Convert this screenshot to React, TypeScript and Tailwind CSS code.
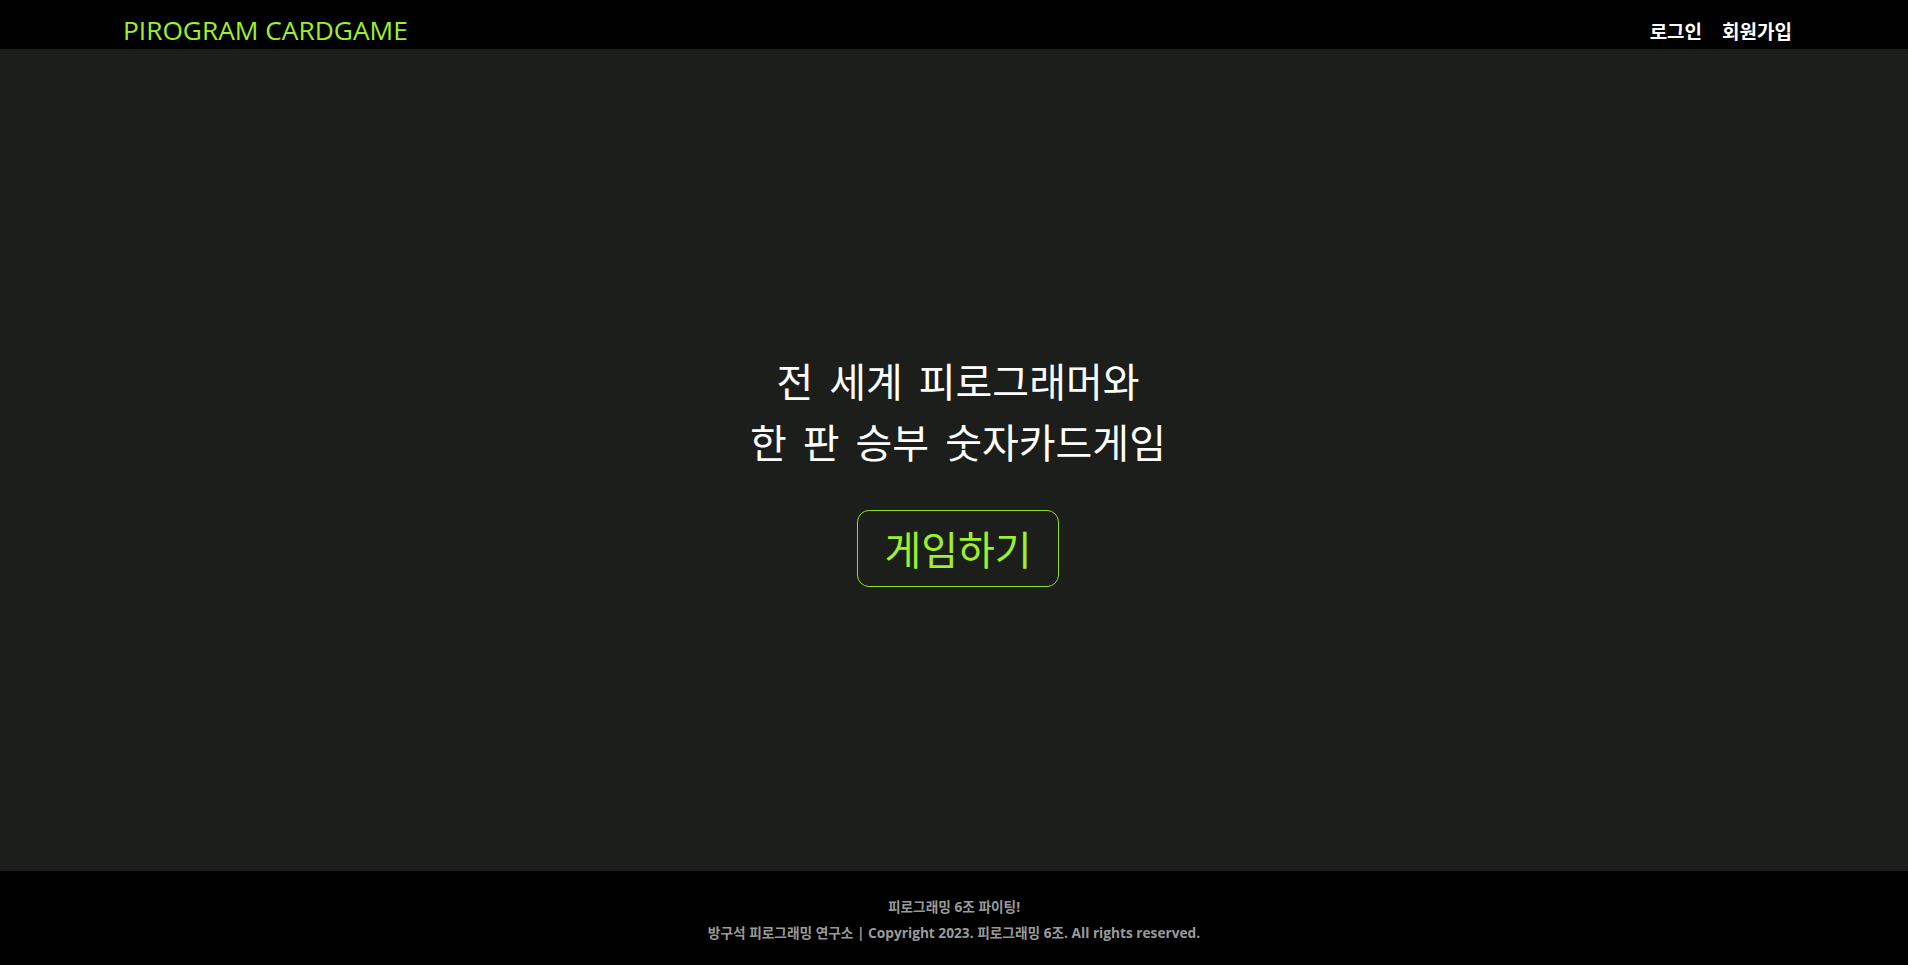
import React from "react";

const latin = { fontFamily: '"Open Sans", "Noto Sans CJK KR", sans-serif' };
const kr = { fontFamily: '"Noto Sans CJK KR", "Open Sans", sans-serif' };

export default function App() {
  return (
    <div className="w-[1908px] h-[965px] flex flex-col bg-[#1b1e1b]" style={kr}>
      <header className="h-[49px] bg-black flex items-end justify-between pl-[123px] pr-[116px]">
        <div className="text-[26.3px] leading-none pb-[6px] text-[#9df02b]" style={latin}>
          PIROGRAM CARDGAME
        </div>
        <nav className="flex gap-[20px] text-[19px] font-bold text-white pb-[9px] leading-none">
          <span>로그인</span>
          <span>회원가입</span>
        </nav>
      </header>
      <main className="h-[822px] flex flex-col items-center justify-center pt-[16px] pl-[8px]">
        <div className="text-white text-[40px] leading-[61px] text-center [word-spacing:7px]">
          <div>전 세계 피로그래머와</div>
          <div>한 판 승부 숫자카드게임</div>
        </div>
        <button className="mt-[38px] w-[202px] h-[77px] rounded-[12px] border border-[#94dc2a] text-[#9df02b] text-[40px] leading-none flex items-center justify-center">
          게임하기
        </button>
      </main>
      <footer className="h-[94px] bg-black flex flex-col items-center pt-[23px] text-[13.7px] font-bold text-[#9a9a9a] leading-[26px]" style={latin}>
        <div>피로그래밍 6조 파이팅!</div>
        <div>방구석 피로그래밍 연구소 | Copyright 2023. 피로그래밍 6조. All rights reserved.</div>
      </footer>
    </div>
  );
}
